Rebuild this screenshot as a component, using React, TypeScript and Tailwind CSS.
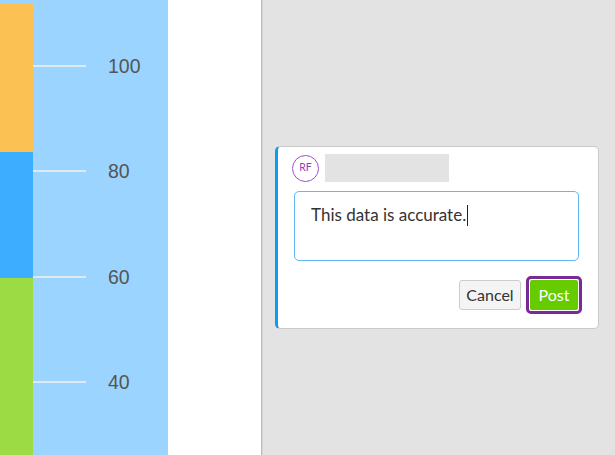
import React from "react";

export default function App() {
  const ticks = [
    { y: 66, label: "100" },
    { y: 171, label: "80" },
    { y: 277, label: "60" },
    { y: 382, label: "40" },
  ];
  return (
    <div className="flex h-[455px] w-[615px] overflow-hidden bg-white" style={{ fontFamily: "Lato, 'Liberation Sans', sans-serif" }}>
      {/* chart strip */}
      <div className="relative flex w-[168px] bg-[#9bd4ff]">
        <div className="flex w-[33px] flex-col">
          <div className="h-[3px] bg-[#9bd4ff]" />
          <div className="h-[149px] bg-[#fcc153]" />
          <div className="h-[126px] bg-[#3daeff]" />
          <div className="flex-1 bg-[#9cdb43]" />
        </div>
        {ticks.map((t) => (
          <div key={t.label} className="absolute left-[33px] flex items-center" style={{ top: t.y - 12 }}>
            <div className="h-[2px] w-[53px] bg-[#dfe9f2]" />
            <span className="ml-[22px] text-[19.5px] leading-[24px] text-[#555]" style={{ fontFamily: "'Liberation Sans', Arial, sans-serif" }}>
              {t.label}
            </span>
          </div>
        ))}
      </div>
      <div className="w-[93px] bg-white" />
      <div className="w-[1px] bg-[#bdbdbd]" />
      <div className="w-[1px] bg-[#d6d6d6]" />
      {/* grey area */}
      <div className="flex-1 bg-[#e3e3e3] pl-[12px] pt-[146px]">
        <div className="flex h-[183px] w-[324px] flex-col rounded-[5px] border border-l-[3px] border-[#c9c9c9] border-l-[#0f9bf2] bg-white pl-[14px]">
          <div className="mt-[7px] flex items-center">
            <div className="flex h-[27px] w-[27px] items-center justify-center rounded-full border border-[#a04ccc] text-[10.5px] text-[#8e3fb8]">
              RF
            </div>
            <div className="ml-[6px] h-[28px] w-[124px] bg-[#e3e3e3]" />
          </div>
          <div className="ml-[2px] mt-[9px] h-[70px] w-[285px] rounded-[5px] border border-[#5fb9f3] px-[16px] pt-[8px]">
            <span className="text-[17px] leading-[24px] text-[#333]">This data is accurate.</span>
            <span className="ml-[1px] inline-block h-[21px] w-[1px] translate-y-[5px] bg-[#222]" />
          </div>
          <div className="mt-[15px] flex items-center justify-end pr-[16px]">
            <div className="flex h-[30px] w-[62px] items-center justify-center rounded-[3px] border border-[#cccccc] bg-[#f4f4f4] text-[16px] text-[#333]">
              Cancel
            </div>
            <div className="ml-[5px] rounded-[5px] border-[3px] border-[#7a2a96] p-[1px]">
              <div className="flex h-[30px] w-[48px] items-center justify-center rounded-[2px] bg-[#66cc00] text-[16px] text-white">
                Post
              </div>
            </div>
          </div>
        </div>
      </div>
    </div>
  );
}
